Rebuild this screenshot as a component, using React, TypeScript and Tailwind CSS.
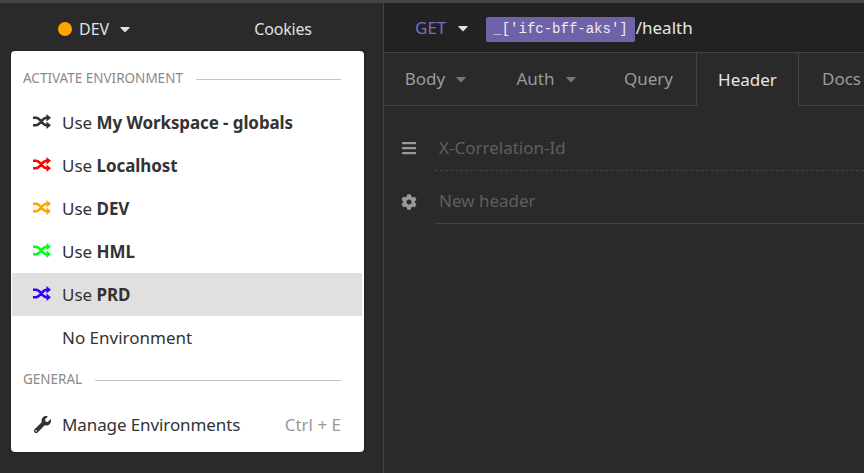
import { FaBars, FaCaretDown, FaCog, FaWrench } from "react-icons/fa";

const envs = [
  { name: "My Workspace - globals", color: "text-[#333333]" },
  { name: "Localhost", color: "text-[#ff0000]" },
  { name: "DEV", color: "text-[#ffa500]" },
  { name: "HML", color: "text-[#00ff1e]" },
  { name: "PRD", color: "text-[#3300ff]", hover: true },
];

// thinner than the shuffle glyph in react-icons, closer to the picture
function ShuffleIcon({ className }: { className: string }) {
  return (
    <svg viewBox="0 0 18 15" className={className}>
      <path
        d="M0 3.8h3c4.5 0 6 7.4 10.5 7.4h1M0 11.2h3c4.5 0 6-7.4 10.5-7.4h1"
        fill="none"
        stroke="currentColor"
        strokeWidth="2.6"
      />
      <path d="M13.5 0l4.5 3.8-4.5 3.8zM13.5 7.4l4.5 3.8-4.5 3.8z" fill="currentColor" />
    </svg>
  );
}

function MenuLabel({ children }: { children: string }) {
  return (
    <div className="flex items-center gap-[13px] pl-3 pr-[23px] h-[30px] text-[13.5px] text-[#8a8a8a]">
      <span>{children}</span>
      <div className="flex-1 h-px mt-[3px] bg-[#c4c4c4]" />
    </div>
  );
}

function Tab({ label, caret, active }: { label: string; caret?: boolean; active?: boolean }) {
  return (
    <div
      className={`flex items-center justify-center gap-2 h-[53px] text-[17px] ${
        active
          ? "w-[103px] text-[#e6e6e6] border-x border-[#444444]"
          : "text-[#9a9a9a] border-b border-[#444444]"
      } ${label === "Body" ? "w-[108px] pr-[2px]" : ""} ${label === "Auth" ? "w-[109px] pl-[2px]" : ""} ${label === "Query" ? "w-[95px]" : ""} ${label === "Docs" ? "flex-1 justify-start pl-[23px]" : ""}`}
    >
      {label}
      {caret && <FaCaretDown className="text-[#777777] text-[16px]" />}
    </div>
  );
}

export default function App() {
  return (
    <div className="relative flex flex-col w-[864px] h-[473px] overflow-hidden bg-[#2a2a2a] font-['Noto_Sans',sans-serif]">
      <div className="h-[3px] bg-[#444444]" />
      <div className="flex flex-1 min-h-0">
        <aside className="w-[384px] shrink-0 border-r border-[#444444]">
          <div className="flex items-center h-[52px] text-[16px] text-[#e0e0e0]">
            <div className="flex items-center w-[213px] pl-[58px]">
              <span className="w-[14px] h-[14px] rounded-full bg-[#ffa500] mr-[7px]" />
              <span>DEV</span>
              <FaCaretDown className="ml-[8px] text-[16px]" />
            </div>
            <span className="w-[140px] text-center tracking-[-0.2px]">Cookies</span>
          </div>
        </aside>

        <main className="flex-1 flex flex-col min-w-0">
          <div className="flex items-center h-[50px] bg-[#222222] border-b border-[#444444] text-[17px]">
            <span className="ml-[31px] text-[#7d69cb]">GET</span>
            <FaCaretDown className="ml-[9px] text-[#e0e0e0] text-[16px]" />
            <span className="ml-[15px] mt-[3px] px-[7px] h-[25px] leading-[25px] rounded-[2px] bg-[#6f62a8] text-[#f0f0f0] text-[14px] font-['Liberation_Mono',monospace]">
              _['ifc-bff-aks']
            </span>
            <span className="ml-[1px] text-[#e6e6e6]">/health</span>
          </div>

          <div className="flex">
            <Tab label="Body" caret />
            <Tab label="Auth" caret />
            <Tab label="Query" />
            <Tab label="Header" active />
            <Tab label="Docs" />
          </div>

          <div className="flex flex-col pl-[17px] pt-[17px] text-[17px] text-[#5f5f5f]">
            <div className="flex items-center h-[52px] pb-[3px]">
              <FaBars className="w-[16px] h-[16px] text-[#999999]" />
              <div className="flex items-center flex-1 h-[46px] ml-[18px] pl-[4px] pt-[1px] border-b border-dashed border-[#444444]">
                X-Correlation-Id
              </div>
            </div>
            <div className="flex items-center h-[49px]">
              <FaCog className="w-[16px] h-[16px] mt-[5px] text-[#999999]" />
              <div className="flex items-center flex-1 h-[49px] ml-[18px] pl-[4px] pt-[3px] border-b border-[#444444]">
                New header
              </div>
            </div>
          </div>
        </main>
      </div>

      <div className="absolute left-[11px] top-[51px] w-[353px] h-[401px] pt-[12px] rounded-[4px] bg-white text-[#333333] shadow-[0_0_2px_rgba(0,0,0,0.5)]">
        <MenuLabel>ACTIVATE ENVIRONMENT</MenuLabel>
        <div className="mt-[8px]">
          {envs.map((env) => (
            <div
              key={env.name}
              className={`flex items-center h-[43px] pl-[21px] ml-px mr-[2px] text-[17px] ${env.hover ? "bg-[#e0e0e0]" : ""}`}
            >
              <ShuffleIcon className={`w-[18px] h-[15px] mr-[11px] mb-[2px] ${env.color}`} />
              <span>
                Use <strong className="font-bold tracking-[-0.1px]">{env.name}</strong>
              </span>
            </div>
          ))}
          <div className="flex items-center h-[43px] pl-[51px] pt-[1px] text-[17px]">No Environment</div>
        </div>
        <div className="mt-[5px]">
          <MenuLabel>GENERAL</MenuLabel>
        </div>
        <div className="flex items-center h-[43px] mt-[9px] pl-[23px] pr-[23px] text-[17px]">
          <FaWrench className="w-[17px] h-[17px] mr-[11px]" />
          <span className="flex-1 tracking-[-0.1px]">Manage Environments</span>
          <span className="text-[#999999]">Ctrl + E</span>
        </div>
      </div>
    </div>
  );
}
